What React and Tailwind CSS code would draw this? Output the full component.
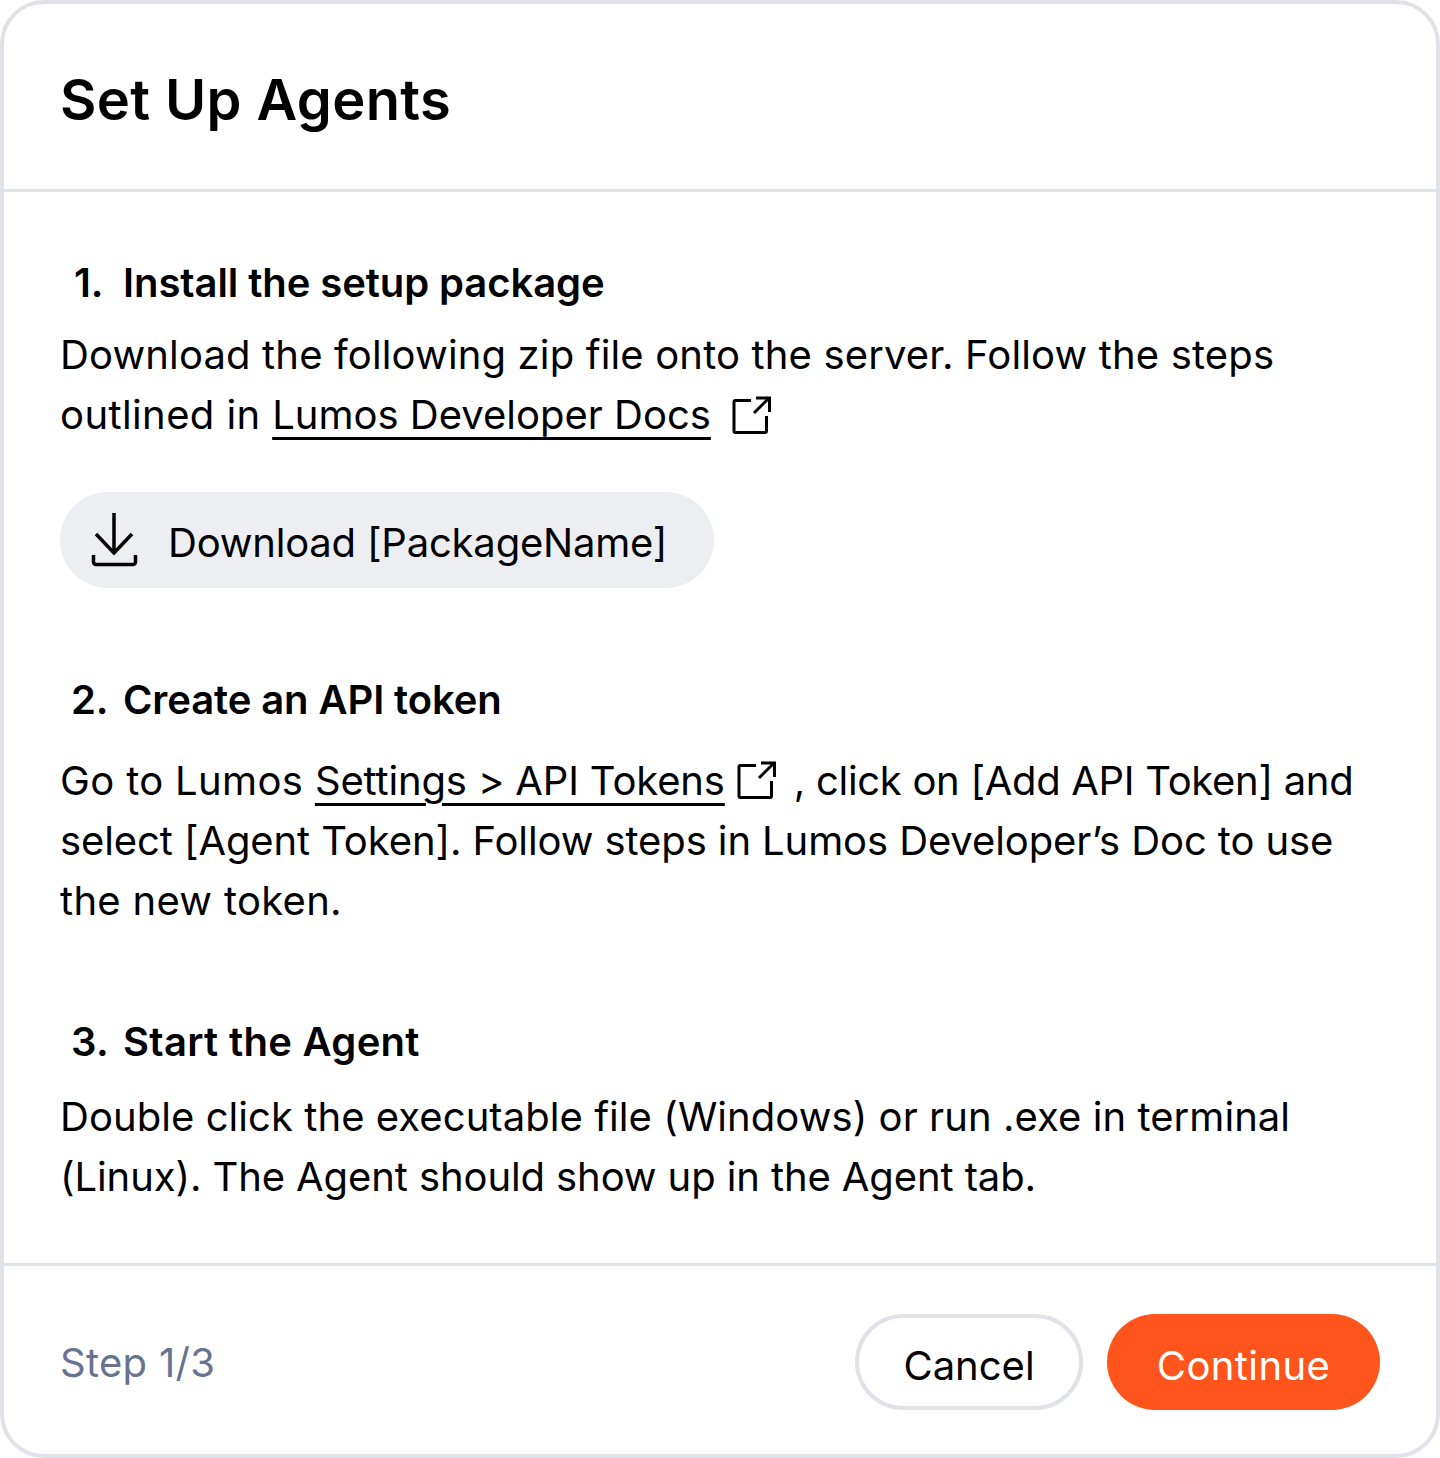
const ExternalIcon = ({ className }) => (
  <svg className={className} viewBox="0 0 40 40" fill="none" stroke="#000" strokeWidth="3">
    <path d="M19 4.5H3.5a1.5 1.5 0 0 0-1.5 1.5v29a1.5 1.5 0 0 0 1.5 1.5h29.5a1.5 1.5 0 0 0 1.5-1.5V20" />
    <path d="M22 17L37 2" />
    <path d="M24 2H37.5V16" />
  </svg>
);

const DownloadIcon = () => (
  <svg className="w-[48px] h-[56px] shrink-0" viewBox="0 0 48 56" fill="none" stroke="#000" strokeWidth="3.5">
    <path d="M24 1V41" />
    <path d="M6 22L24 41L42 22" />
    <path d="M3.5 43V50a2.5 2.5 0 0 0 2.5 2.5H43a2.5 2.5 0 0 0 2.5-2.5V43" />
  </svg>
);

export default function App() {
  return (
    <div className="h-[1458px] w-[1440px] flex flex-col bg-white border-4 border-[#e1e2e8] rounded-[44px] text-black font-['Inter',sans-serif] text-[40px] leading-[60px]">
      {/* header */}
      <div className="h-[188px] shrink-0 border-b-[3px] border-[#e1e2e8] pl-[56px] pt-[60px]">
        <h1 className="text-[56px] leading-[72px] font-semibold tracking-[0.4px]">Set Up Agents</h1>
      </div>

      {/* steps */}
      <div className="h-[1071px] shrink-0 pl-[56px] pr-[56px]">
        <h2 className="mt-[61px] ml-[14px] font-semibold flex tracking-[-0.08px]">
          <span className="w-[49px]">1.</span>Install the setup package
        </h2>
        <p className="mt-[12px] tracking-[0.15px]">Download the following zip file onto the server. Follow the steps</p>
        <p className="flex items-center">
          <span className="tracking-[0.4px]">outlined in&nbsp;</span>
          <a className="underline underline-offset-[8px] decoration-[3px]">Lumos Developer Docs</a>
          <ExternalIcon className="ml-[21px] w-[40px] h-[40px] mt-[2px]" />
        </p>
        <button className="mt-[47px] h-[96px] w-[654px] rounded-[48px] bg-[#edeef2] flex items-center pl-[30px]">
          <DownloadIcon />
          <span className="ml-[30px] pt-[6px] tracking-[-0.2px]">Download [PackageName]</span>
        </button>

        <h2 className="mt-[82px] ml-[11px] font-semibold flex tracking-[-0.1px]">
          <span className="w-[52px]">2.</span>Create an API token
        </h2>
        <p className="mt-[21px] flex items-center">
          <span className="tracking-[0.35px]">Go to Lumos&nbsp;</span>
          <a className="underline underline-offset-[8px] decoration-[3px] tracking-[-0.15px]">Settings &gt; API Tokens</a>
          <ExternalIcon className="ml-[12px] w-[40px] h-[40px]" />
          <span className="ml-[17px] tracking-[-0.3px]">, click on [Add API Token] and</span>
        </p>
        <p className="tracking-[-0.1px]">select [Agent Token]. Follow steps in Lumos Developer’s Doc to use</p>
        <p className="tracking-[0.3px]">the new token.</p>

        <h2 className="mt-[81px] ml-[11px] font-semibold flex tracking-[0.3px]">
          <span className="w-[52px]">3.</span>Start the Agent
        </h2>
        <p className="mt-[15px] tracking-[0.06px]">Double click the executable file (Windows) or run .exe in terminal</p>
        <p className="tracking-[-0.1px]">(Linux). The Agent should show up in the Agent tab.</p>
      </div>

      {/* footer */}
      <div className="flex-1 border-t-[3px] border-[#e1e2e8] flex items-start justify-between pt-[48px] pl-[56px] pr-[56px]">
        <span className="mt-[19px] text-[#67738f] tracking-[0.3px]">Step 1/3</span>
        <div className="flex gap-[24px]">
          <button className="w-[228px] h-[96px] pt-[8px] rounded-[48px] border-4 border-[#e1e2e8] bg-white">Cancel</button>
          <button className="w-[273px] h-[96px] pt-[8px] rounded-[48px] bg-[#ff551c] text-white tracking-[0.4px]">Continue</button>
        </div>
      </div>
    </div>
  );
}
